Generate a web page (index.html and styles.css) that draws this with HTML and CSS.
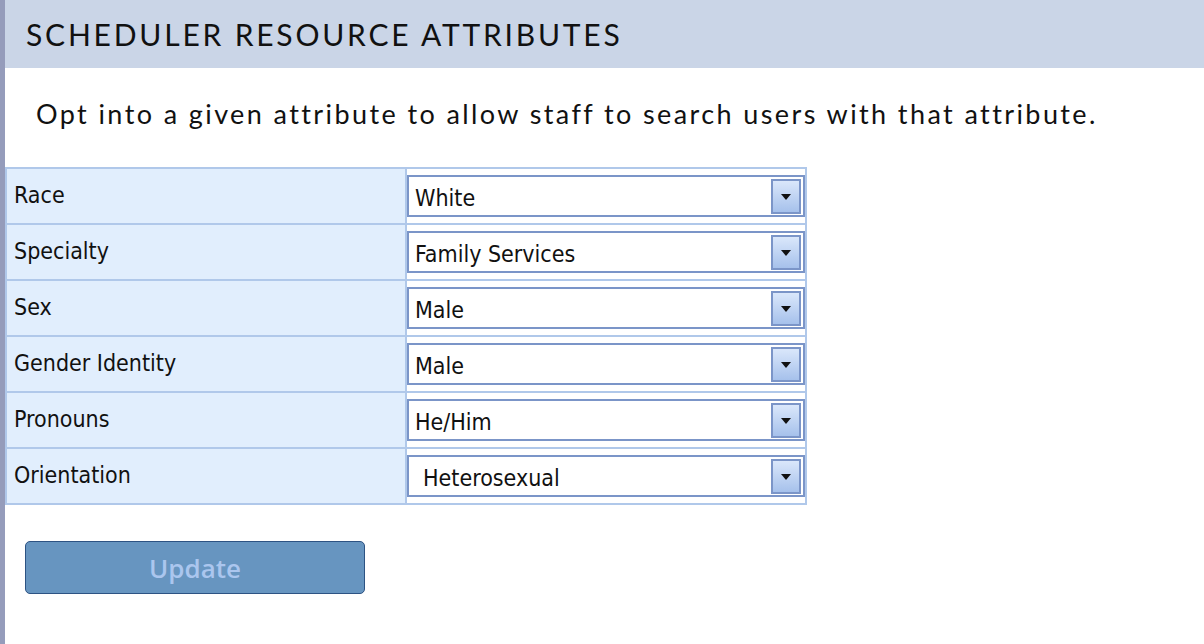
FILE: index.html
```html
<!DOCTYPE html>
<html lang="en">
<head>
  <meta charset="UTF-8" />
  <meta name="viewport" content="width=device-width, initial-scale=1.0" />
  <title>Scheduler Resource Attributes</title>
  <link rel="stylesheet" href="styles.css">
</head>
<body>

<div class="page">
  <!-- Header -->
  <div class="page-header">
    <h1 class="page-title">SCHEDULER RESOURCE ATTRIBUTES</h1>
  </div>

  <p class="intro">Opt into a given attribute to allow staff to search users with that attribute.</p>

  <!-- Attributes -->
  <table class="attr-table">
    <tr>
      <td class="attr-label">Race</td>
      <td class="attr-value">
        <div class="select-box">
          <select><option>White</option></select>
          <span class="select-arrow"></span>
        </div>
      </td>
    </tr>
    <tr>
      <td class="attr-label">Specialty</td>
      <td class="attr-value">
        <div class="select-box">
          <select><option>Family Services</option></select>
          <span class="select-arrow"></span>
        </div>
      </td>
    </tr>
    <tr>
      <td class="attr-label">Sex</td>
      <td class="attr-value">
        <div class="select-box">
          <select><option>Male</option></select>
          <span class="select-arrow"></span>
        </div>
      </td>
    </tr>
    <tr>
      <td class="attr-label">Gender Identity</td>
      <td class="attr-value">
        <div class="select-box">
          <select><option>Male</option></select>
          <span class="select-arrow"></span>
        </div>
      </td>
    </tr>
    <tr>
      <td class="attr-label">Pronouns</td>
      <td class="attr-value">
        <div class="select-box">
          <select><option>He/Him</option></select>
          <span class="select-arrow"></span>
        </div>
      </td>
    </tr>
    <tr>
      <td class="attr-label">Orientation</td>
      <td class="attr-value">
        <div class="select-box select-wide">
          <select><option>Heterosexual</option></select>
          <span class="select-arrow"></span>
        </div>
      </td>
    </tr>
  </table>

  <button class="update-btn" disabled>Update</button>
</div>

</body>
</html>
```

FILE: styles.css
```css
/* General Styling */
body {
  margin: 0;
  background-color: #ffffff;
  color: #111111;
  font-family: "Lato", "Noto Sans", sans-serif;
}

.page {
  min-height: 644px;
  border-left: 5px solid #959cbb;
  box-sizing: border-box;
}

/* Header */
.page-header {
  background-color: #cad5e7;
  height: 68px;
  display: flex;
  align-items: center;
  padding-left: 21px;
}

.page-title {
  margin: 0;
  font-size: 30px;
  font-weight: normal;
  letter-spacing: 2.8px;
}

.intro {
  margin: 29px 0 37px 31px;
  font-size: 27px;
  letter-spacing: 2.4px;
}

/* Attribute Table */
.attr-table {
  border-collapse: collapse;
  width: 802px;
  font-family: "DejaVu Sans Condensed", "DejaVu Sans", sans-serif;
  font-size: 23px;
}

.attr-table td {
  border: 2px solid #b0c8ea;
  padding: 0;
}

.attr-label {
  width: 391px;
  background-color: #e1eefd;
  padding-left: 7px !important;
  vertical-align: top;
  line-height: 52px;
}

.attr-value {
  padding: 6px 0 6px 0 !important;
}

.select-box {
  position: relative;
  height: 42px;
}

.select-box select {
  display: block;
  appearance: none;
  -webkit-appearance: none;
  width: 100%;
  height: 42px;
  border: 2px solid #7b95c8;
  border-radius: 0;
  background: #ffffff;
  font-family: inherit;
  font-size: 23px;
  color: #111111;
  padding: 4px 0 0 6px;
  margin: 0;
}

.select-wide select {
  padding-left: 14px;
}

.select-arrow {
  position: absolute;
  top: 4px;
  right: 4px;
  width: 26px;
  height: 31px;
  border: 2px solid #7b95c8;
  background: linear-gradient(#dae7fb, #a6c1eb);
  pointer-events: none;
}

.select-arrow::after {
  content: "";
  position: absolute;
  left: 8px;
  top: 13px;
  border-left: 5px solid transparent;
  border-right: 5px solid transparent;
  border-top: 6px solid #111111;
}

/* Button */
.update-btn {
  display: block;
  margin: 36px 0 0 20px;
  width: 340px;
  height: 53px;
  background-color: #6795c0;
  border: 1px solid #2d5383;
  border-radius: 5px;
  color: #abc6ee;
  font-family: "Open Sans", sans-serif;
  font-size: 26px;
  font-weight: 600;
}
```
